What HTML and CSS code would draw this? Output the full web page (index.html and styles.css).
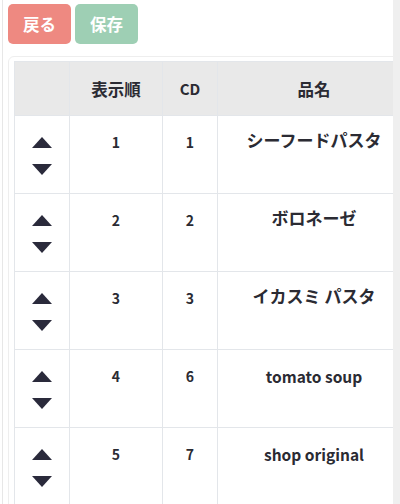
FILE: index.html
```html
<!DOCTYPE html>
<html lang="ja">
<head>
<meta charset="utf-8">
<link rel="stylesheet" href="styles.css">
</head>
<body>
<div class="page">
  <div class="edge"><div class="edge-line"></div></div>
  <div class="main">
    <div class="actions">
      <button class="btn btn-back">戻る</button>
      <button class="btn btn-save">保存</button>
    </div>
    <div class="card">
      <table class="grid">
        <colgroup>
          <col class="c-move"><col class="c-order"><col class="c-cd"><col class="c-name">
        </colgroup>
        <thead>
          <tr><th></th><th class="jp">表示順</th><th>CD</th><th class="jp">品名</th></tr>
        </thead>
        <tbody>
          <tr>
            <td class="move"><div class="arrows"><svg class="up" width="20" height="11" viewBox="0 0 20 11"><polygon points="10,0 20,11 0,11"/></svg><svg class="down" width="20" height="11" viewBox="0 0 20 11"><polygon points="0,0 20,0 10,11"/></svg></div></td>
            <td class="num">1</td><td class="num">1</td><td class="name jp">シーフードパスタ</td>
          </tr>
          <tr>
            <td class="move"><div class="arrows"><svg class="up" width="20" height="11" viewBox="0 0 20 11"><polygon points="10,0 20,11 0,11"/></svg><svg class="down" width="20" height="11" viewBox="0 0 20 11"><polygon points="0,0 20,0 10,11"/></svg></div></td>
            <td class="num">2</td><td class="num">2</td><td class="name jp">ボロネーゼ</td>
          </tr>
          <tr>
            <td class="move"><div class="arrows"><svg class="up" width="20" height="11" viewBox="0 0 20 11"><polygon points="10,0 20,11 0,11"/></svg><svg class="down" width="20" height="11" viewBox="0 0 20 11"><polygon points="0,0 20,0 10,11"/></svg></div></td>
            <td class="num">3</td><td class="num">3</td><td class="name jp">イカスミ パスタ</td>
          </tr>
          <tr>
            <td class="move"><div class="arrows"><svg class="up" width="20" height="11" viewBox="0 0 20 11"><polygon points="10,0 20,11 0,11"/></svg><svg class="down" width="20" height="11" viewBox="0 0 20 11"><polygon points="0,0 20,0 10,11"/></svg></div></td>
            <td class="num">4</td><td class="num">6</td><td class="name en">tomato soup</td>
          </tr>
          <tr>
            <td class="move"><div class="arrows"><svg class="up" width="20" height="11" viewBox="0 0 20 11"><polygon points="10,0 20,11 0,11"/></svg><svg class="down" width="20" height="11" viewBox="0 0 20 11"><polygon points="0,0 20,0 10,11"/></svg></div></td>
            <td class="num">5</td><td class="num">7</td><td class="name en">shop original</td>
          </tr>
        </tbody>
      </table>
    </div>
  </div>
  <div class="strip"></div>
</div>
</body>
</html>
```
FILE: styles.css
```css
html, body {
  margin: 0;
  padding: 0;
  background: #ffffff;
  font-family: "Noto Sans CJK JP", "Noto Sans", sans-serif;
  color: #2b2b33;
}
.page {
  display: flex;
  width: 400px;
  height: 504px;
  overflow: hidden;
}
.edge {
  width: 8px;
  flex: none;
}
.edge-line {
  margin-left: 2px;
  width: 1px;
  height: 100%;
  background: #e7e7e7;
}
.main {
  width: 385px;
  flex: none;
  overflow: hidden;
  padding-top: 4px;
}
.strip {
  width: 7px;
  flex: none;
  background: #efefef;
}
.actions {
  display: flex;
  gap: 4px;
}
.btn {
  width: 63px;
  height: 40px;
  border: none;
  border-radius: 5px;
  color: #ffffff;
  font-family: "Noto Sans CJK JP", sans-serif;
  font-weight: 700;
  font-size: 16.5px;
  padding: 0;
}
.btn-back { background: #ee8981; }
.btn-save { background: #9ecfb4; }
.card {
  margin-top: 12px;
  width: 420px;
  border: 1px solid #eeeeee;
  border-radius: 6px;
  padding: 4px 5px;
}
.grid {
  border-collapse: collapse;
  table-layout: fixed;
  width: 396px;
}
.c-move { width: 55px; }
.c-order { width: 93px; }
.c-cd { width: 55px; }
.c-name { width: 193px; }
.grid th, .grid td {
  border: 1px solid #e3e6ea;
  padding: 0;
  text-align: center;
}
.grid thead tr { height: 54px; }
.grid th {
  background: #e9e9e9;
  font-size: 15px;
  font-weight: 700;
  vertical-align: middle;
}
.grid th.jp { font-size: 16.5px; }
.grid tbody tr { height: 78px; }
.grid td { vertical-align: top; }
.num {
  font-size: 14px;
  font-weight: 700;
  line-height: 20px;
  padding-top: 16px !important;
}
.name.jp {
  font-size: 17px;
  font-weight: 700;
  line-height: 24px;
  padding-top: 12px !important;
}
.name.en {
  font-size: 15.5px;
  font-weight: 700;
  line-height: 20px;
  padding-top: 16px !important;
}
.arrows {
  display: flex;
  flex-direction: column;
  align-items: center;
  gap: 16px;
  padding-top: 21px;
}
.arrows svg { display: block; fill: #2a2a3b; }
```
